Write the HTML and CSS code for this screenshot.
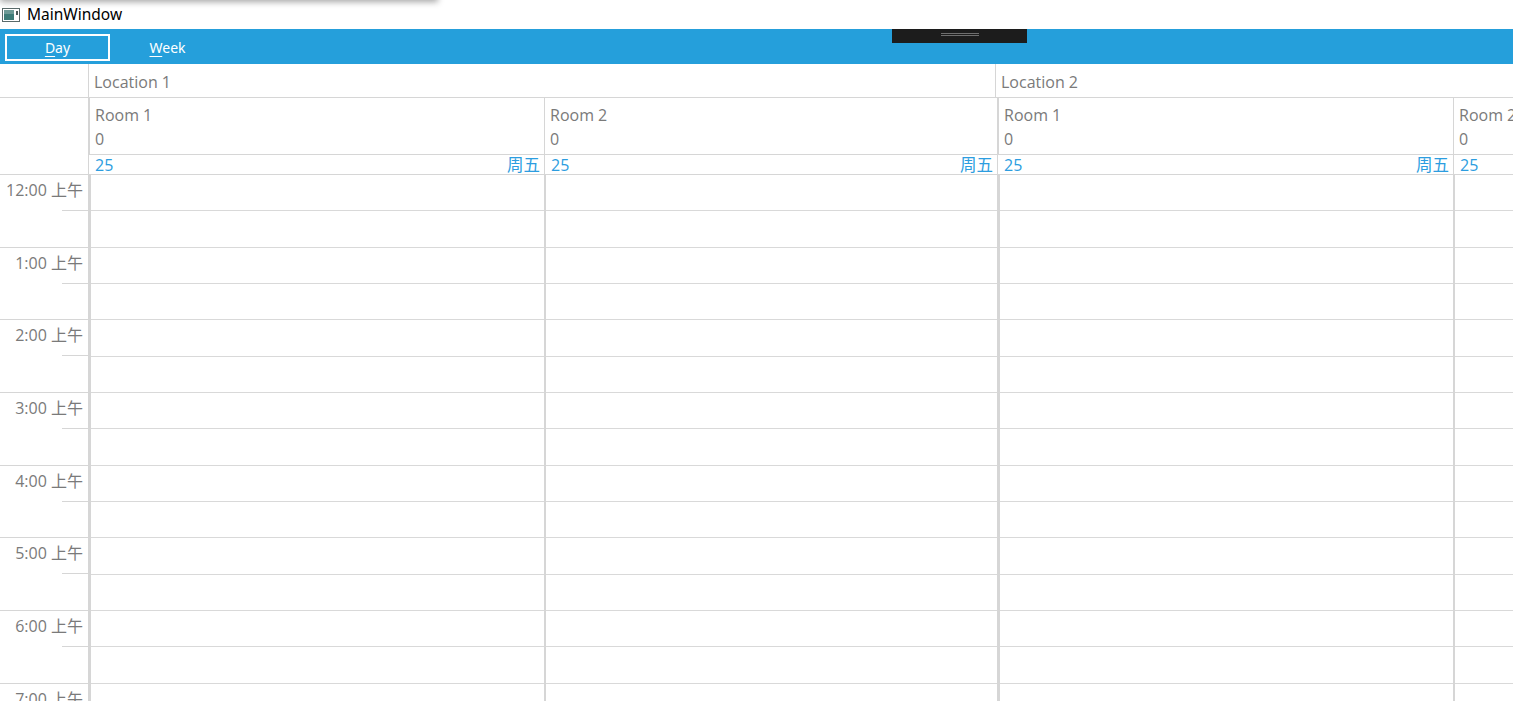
FILE: index.html
```html
<!DOCTYPE html>
<html>
<head>
    <title>MainWindow</title>
    <link rel="stylesheet" href="styles.css">
</head>
<body>
    <div class="window-shadow"></div>
    <div class="titlebar">
        <svg class="app-icon" width="18" height="14" viewBox="0 0 18 14">
            <rect x="0.5" y="0.5" width="17" height="13" fill="#fff" stroke="#5a6a6a"/>
            <rect x="2" y="2" width="10" height="10" fill="#3d7c78"/>
            <rect x="2" y="2" width="10" height="4" fill="#6c9a96"/>
            <rect x="14" y="3" width="2" height="4" fill="#4a5a5a"/>
        </svg>
        <span class="title">MainWindow</span>
    </div>

    <div class="toolbar">
        <button class="view-btn active"><u>D</u>ay</button>
        <button class="view-btn"><u>W</u>eek</button>
        <div class="grip-popup"><span class="grip"></span></div>
    </div>

    <div class="scheduler">
        <div class="locations">
            <div class="corner"></div>
            <div class="location loc-first">Location 1</div>
            <div class="location">Location 2</div>
        </div>

        <div class="columns">
            <div class="gutter">
                <div class="gutter-head"></div>
                <div id="times"></div>
            </div>
            <div class="room wide" data-name="Room 1"></div>
            <div class="room" data-name="Room 2"></div>
            <div class="room wide" data-name="Room 1"></div>
            <div class="room" data-name="Room 2"></div>
        </div>
    </div>

    <script>
        var HOURS = 8;

        // time labels down the left gutter
        var times = document.getElementById("times");
        for (var h = 0; h < HOURS; h++) {
            var label = (h === 0 ? 12 : h) + ":00 上午";
            var block = document.createElement("div");
            block.className = "hour";
            block.innerHTML = '<span class="time">' + label + '</span><span class="half"></span>';
            times.appendChild(block);
        }

        // each room column: header, date row, half hour slots
        var rooms = document.querySelectorAll(".room");
        for (var i = 0; i < rooms.length; i++) {
            var room = rooms[i];
            var html = `
                <div class="room-head">
                    <div class="room-name">${room.dataset.name}</div>
                    <div class="room-count">0</div>
                </div>
                <div class="date-row"><span>25</span><span class="weekday">周五</span></div>
                <div class="slots">`;
            for (var s = 0; s < HOURS * 2; s++) {
                html += '<div class="slot"></div>';
            }
            html += '</div>';
            room.innerHTML = html;
        }
    </script>
</body>
</html>
```

FILE: styles.css
```css
body {
    margin: 0;
    height: 100vh;
    overflow: hidden;
    background-color: #fff;
    font-family: "Open Sans", "Noto Sans CJK SC", sans-serif;
    position: relative;
}
.window-shadow {
    position: absolute;
    left: 0;
    top: -10px;
    width: 438px;
    height: 10px;
    box-shadow: 0 2px 6px rgba(0, 0, 0, 0.35);
}
.titlebar {
    height: 29px;
    display: flex;
    align-items: center;
    padding-left: 2px;
}
.app-icon {
    margin-right: 7px;
}
.title {
    font-family: "Noto Sans", sans-serif;
    font-size: 15.5px;
    color: #000;
    padding-bottom: 1px;
}
.toolbar {
    height: 35px;
    background-color: #259fdb;
    display: flex;
    align-items: center;
    gap: 5px;
    padding-left: 5px;
    position: relative;
}
.view-btn {
    background: transparent;
    border: none;
    color: #fff;
    font-family: "Noto Sans", sans-serif;
    font-size: 14px;
    width: 105px;
    height: 27px;
    padding: 0;
    margin-top: 1px;
    cursor: pointer;
}
.view-btn.active {
    border: 2px solid #fff;
}
.view-btn u {
    text-underline-offset: 3px;
}
.grip-popup {
    position: absolute;
    left: 892px;
    top: 0;
    width: 135px;
    height: 14px;
    background-color: #1c1c1c;
}
.grip {
    position: absolute;
    left: 49px;
    top: 4px;
    width: 38px;
    height: 1px;
    border-top: 1px solid #6e6e6e;
    border-bottom: 1px solid #6e6e6e;
}

/* scheduler */
.scheduler {
    color: #7a7a7a;
    font-size: 16px;
}
.locations {
    display: flex;
    height: 34px;
    border-bottom: 1px solid #d6d6d6;
    box-sizing: border-box;
}
.corner {
    width: 88px;
    border-right: 1px solid #d6d6d6;
}
.location {
    padding-left: 5px;
    line-height: 36px;
    flex: none;
}
.loc-first {
    width: 901px;
    border-right: 1px solid #d6d6d6;
}
.columns {
    display: flex;
}
.gutter {
    width: 88px;
    flex: none;
}
.gutter-head {
    height: 76px;
    border-bottom: 1px solid #d6d6d6;
}
.hour {
    height: 72.7px;
    box-sizing: border-box;
    border-bottom: 1px solid #d6d6d6;
    position: relative;
}
.time {
    position: absolute;
    right: 5px;
    top: 2px;
    white-space: nowrap;
}
.half {
    position: absolute;
    left: 62px;
    right: 0;
    top: 35px;
    border-top: 1px solid #d6d6d6;
}
.room {
    width: 453px;
    flex: none;
}
.room.wide {
    width: 456px;
}
.room-head {
    height: 57px;
    border-left: 1px solid #d6d6d6;
    border-bottom: 1px solid #d6d6d6;
    padding: 5px 0 0 5px;
    box-sizing: border-box;
    line-height: 24px;
}
.room.wide .room-head {
    border-left-width: 2px;
}
.date-row {
    height: 19px;
    border-left: 1px solid #d6d6d6;
    border-bottom: 1px solid #d6d6d6;
    display: flex;
    justify-content: space-between;
    padding: 0 4px 0 6px;
    color: #2c9de0;
    line-height: 20px;
}
.weekday {
    font-size: 16.5px;
}
.slots {
    border-left: 2px solid #d6d6d6;
}
.room.wide .slots {
    border-left-width: 3px;
}
.slot {
    height: 36.35px;
    box-sizing: border-box;
    border-bottom: 1px solid #d9d9d9;
}
```
